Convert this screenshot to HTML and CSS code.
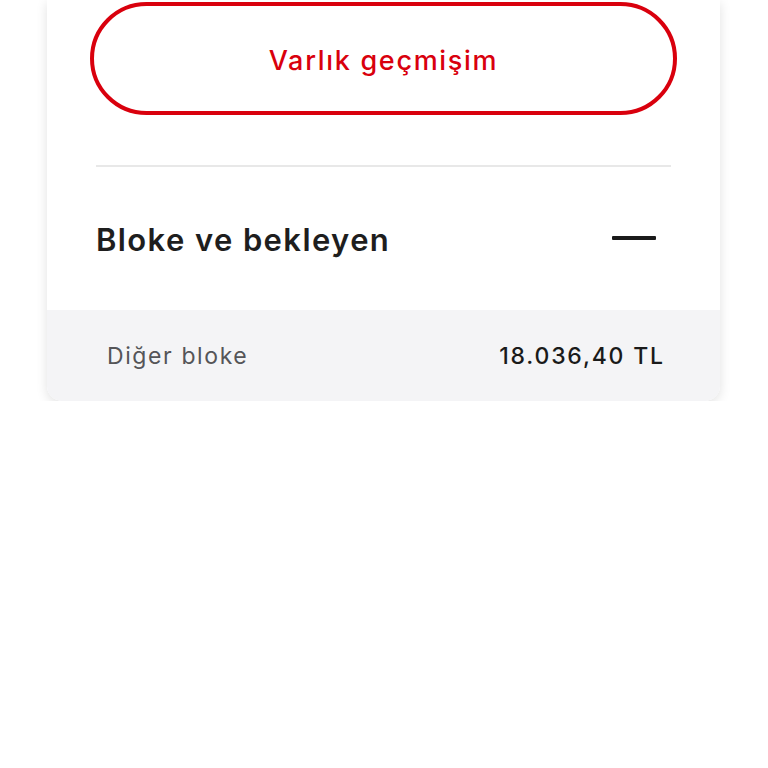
FILE: index.html
```html
<!DOCTYPE html>
<html lang="tr">
<head>
    <meta charset="UTF-8">
    <meta name="viewport" content="width=device-width, initial-scale=1.0">
    <title>Varlıklarım</title>
    <link rel="stylesheet" href="styles.css">
</head>
<body>
    <div class="card">
        <div class="card-top">
            <button class="history-button">Varlık geçmişim</button>
            <div class="divider"></div>
            <div class="section-head">
                <h3 class="section-title">Bloke ve bekleyen</h3>
                <span class="collapse-icon"></span>
            </div>
        </div>
        <div class="detail-row">
            <span class="detail-label">Diğer bloke</span>
            <span class="detail-value">18.036,40 TL</span>
        </div>
    </div>
</body>
</html>
```

FILE: styles.css
```css
body { margin: 0; background: #ffffff; font-family: Inter, "Noto Sans", sans-serif; }
.card { width: 673px; margin: 0 0 0 47px; background: #ffffff; border-radius: 0 0 15px 15px; box-shadow: 0 3px 12px rgba(0, 0, 0, 0.12); overflow: hidden; }
.card-top { padding: 2px 43px 0 43px; }
.history-button { display: block; width: 100%; height: 113px; padding-top: 4px; border: 4px solid #d9000d; border-radius: 57px; background: #ffffff; color: #d9000d; font-family: Inter, "Noto Sans", sans-serif; font-size: 27px; font-weight: 500; letter-spacing: 1.7px; cursor: pointer; }
.divider { height: 2px; background: #e8e8e8; margin: 50px 6px 0 6px; }
.section-head { display: flex; align-items: center; justify-content: space-between; height: 143px; padding: 2px 21px 0 6px; box-sizing: border-box; }
.section-title { margin: 0; font-size: 31px; font-weight: 600; color: #1e1e1e; letter-spacing: 1.4px; }
.collapse-icon { width: 44px; height: 4px; margin-top: -4px; background: #1a1a1a; border-radius: 1px; }
.detail-row { display: flex; align-items: center; justify-content: space-between; height: 91px; padding: 0 57px 0 60px; background: #f4f4f6; }
.detail-label { font-size: 23px; color: #555558; letter-spacing: 1.6px; }
.detail-value { font-size: 23px; font-weight: 500; color: #1a1a1a; letter-spacing: 1.8px; margin-right: -1.8px; }
```
